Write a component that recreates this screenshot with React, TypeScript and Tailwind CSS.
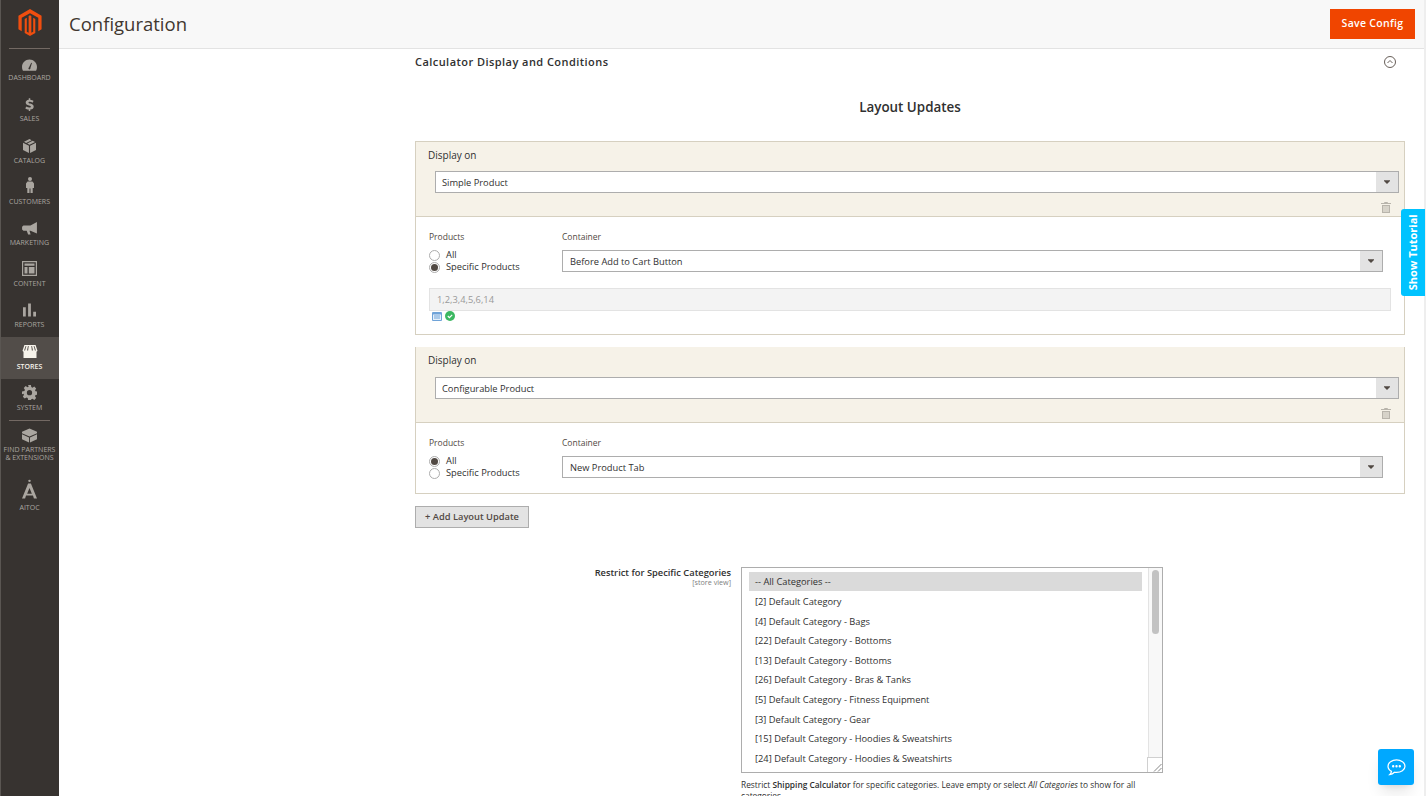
import type { ReactNode } from 'react';

const font = "font-['Open_Sans',sans-serif]";

// sidebar icons are drawn by hand, the admin font is not available here
const icons: Record<string, ReactNode> = {
  dashboard: (
    <svg viewBox="0 0 16 12" className="w-[15px] h-[12px] translate-y-[2px]" fill="currentColor">
      <path d="M8 0C3.6 0 0 3.6 0 8c0 1.4.3 2.8 1 4h14c.7-1.2 1-2.6 1-4 0-4.4-3.6-8-8-8zM7.4 8.6l2.4-5 .8.3-1.6 5.4a1.1 1.1 0 1 1-1.6-.7z" fillRule="evenodd" />
    </svg>
  ),
  sales: (
    <svg viewBox="0 0 12 17" className="w-[9px] h-[15px]" fill="currentColor">
      <path d="M5 0h2v2c2 .2 3.6 1 4.4 1.7L10 6C9 5.200 7.800 4.700 6.400 4.700c-1.200 0-1.800.4-1.800 1 0 .7.8 1 2.600 1.600 2.700.8 4.400 1.800 4.400 4.200 0 2-1.500 3.500-4.600 3.800V17H5v-1.700C3 15.100 1.300 14.300.3 13.400L2 11.100c1.100.9 2.500 1.500 4 1.500 1.300 0 1.900-.4 1.900-1.100 0-.7-.8-1.100-2.600-1.700C2.600 9 .9 8 .9 5.800.9 3.900 2.400 2.400 5 2V0z" />
    </svg>
  ),
  catalog: (
    <svg viewBox="0 0 14 15" className="w-[13px] h-[14px]" fill="currentColor">
      <path d="M7 0l2.300 1.200-5.900 3-2.300-1.200L7 0zM10.400 1.800L13 3.100 7 6.100 4.500 4.800l5.900-3zM0 4l6.400 3.200V15L0 11.700V4zM14 4v7.700L7.600 15V7.200L14 4z" />
    </svg>
  ),
  customers: (
    <svg viewBox="0 0 8 16" className="w-[8px] h-[16px] -translate-y-[2px]" fill="currentColor">
      <circle cx="4" cy="2" r="2" />
      <path d="M1.500 4.600h5L8 6.500v4.500H6.700V16H4.500v-4.500h-1V16H1.300v-5H0V6.500z" />
    </svg>
  ),
  marketing: (
    <svg viewBox="0 0 16 14" className="w-[15px] h-[13px] translate-y-[1px]" fill="currentColor">
      <path d="M16 0v12.500L9 9.300H8l1.200 4.200H6.500L5 9.300H1.500L0 8V5l1.500-1.200H9L16 0z" />
    </svg>
  ),
  content: (
    <svg viewBox="0 0 15 15" className="w-[15px] h-[15px] -translate-y-[1px]" fill="currentColor">
      <path fillRule="evenodd" d="M0 0h15v15H0V0zm1.200 1.200v12.600h12.600V1.200H1.200zM2.500 2.500h10v2.300h-10V2.500zM2.500 6h3v6.500h-3V6zM6.800 6h5.700v6.500H6.800V6z" />
    </svg>
  ),
  reports: (
    <svg viewBox="0 0 14 14" className="w-[13px] h-[14px]" fill="currentColor">
      <path d="M0 4h3v10H0zM5.500 0h3v14h-3zM11 9h3v5h-3z" />
    </svg>
  ),
  stores: (
    <svg viewBox="0 0 16 14" className="w-[16px] h-[13px]" fill="currentColor">
      <path fillRule="evenodd" d="M2 0h12l2 6c0 .8-.5 1.200-1 1.200V14H1V7.200C.5 7.200 0 6.800 0 6l2-6zm1.300 1L1.600 6h1.100l1.400-5h-.8zm2.500 0L4.800 6H6l.6-5h-.8zm3.600 0L10 6h1.200l-1-5h-.8zm2.500 0l1.400 5h1.100L12.700 1h-.8z" />
    </svg>
  ),
  system: (
    <svg viewBox="0 0 16 16" className="w-[15px] h-[15px]" fill="currentColor">
      <path fillRule="evenodd" d="M6.500 0h3l.4 2.200 1.300.6L13.100 1.500l2 2.100-1.200 1.900.5 1.200 2.600.5v3l-2.600.5-.5 1.200 1.200 1.900-2 2.100-1.900-1.300-1.300.6L9.500 16h-3l-.4-2.200-1.300-.6-1.900 1.300-2-2.100 1.200-1.900-.5-1.200L0 9.800v-3l2.600-.5.5-1.200L1.900 3.200l2-2.100 1.900 1.300 1.300-.6L6.500 0zM8 5.400a2.800 2.800 0 1 0 0 5.600 2.800 2.800 0 0 0 0-5.600z" />
    </svg>
  ),
  partners: (
    <svg viewBox="0 0 16 15" className="w-[15px] h-[15px]" fill="currentColor">
      <path d="M8 0l8 3.600v1.400L8 8.600 0 5V3.600L8 0zM0 6.200l7.500 3.400V15L0 11.600V6.200zM16 6.200v5.400L8.500 15V9.600L16 6.200z" />
    </svg>
  ),
  aitoc: (
    <svg viewBox="0 0 16 20" className="w-[15px] h-[20px]" fill="currentColor">
      <circle cx="8" cy="1.300" r="1.300" />
      <path fillRule="evenodd" d="M6.500 4h3L16 20h-3.300l-1-3H4.300l-1 3H0L6.500 4zM8 9l-2.500 6h5L8 9z" />
    </svg>
  ),
};

const navItems = [
  { key: 'dashboard', label: 'DASHBOARD' },
  { key: 'sales', label: 'SALES' },
  { key: 'catalog', label: 'CATALOG' },
  { key: 'customers', label: 'CUSTOMERS' },
  { key: 'marketing', label: 'MARKETING' },
  { key: 'content', label: 'CONTENT' },
  { key: 'reports', label: 'REPORTS' },
  { key: 'stores', label: 'STORES', active: true },
  { key: 'system', label: 'SYSTEM' },
];

const categories = [
  '[2] Default Category',
  '[4] Default Category - Bags',
  '[22] Default Category - Bottoms',
  '[13] Default Category - Bottoms',
  '[26] Default Category - Bras & Tanks',
  '[5] Default Category - Fitness Equipment',
  '[3] Default Category - Gear',
  '[15] Default Category - Hoodies & Sweatshirts',
  '[24] Default Category - Hoodies & Sweatshirts',
];

function Sidebar() {
  return (
    <aside className="w-[59px] h-full shrink-0 bg-[#373330] border-l border-l-[#5a5652] flex flex-col text-[#aaa6a0]">
      <div className="h-[49px] ml-[8px] mr-[9px] border-b border-[#736963] flex items-start justify-center pt-[9px] shrink-0">
        <svg viewBox="0 0 24 28" className="w-[24px] h-[27px]" fill="#f04e0f">
          <path d="M12 0L24 7v14l-3.400 2V9.200L12 4.400 3.400 9.200V23L0 21V7z" />
          <path d="M6.500 10.300L8.700 9.100v14.500l1.900 1.100V7.300L12 6.500l1.400.8v17.400l1.900-1.100V9.100l2.200 1.200V25L12 28l-5.500-3z" />
        </svg>
      </div>
      {navItems.map((item) => (
        <div
          key={item.key}
          className={`h-[41.2px] shrink-0 flex flex-col items-center justify-end pb-[6px] pr-[1px] ${
            item.active ? 'bg-[#524d49] text-[#f7f3eb] font-semibold' : ''
          }`}
        >
          <div className="h-[18px] flex items-center justify-center">{icons[item.key]}</div>
          <span className="text-[7px] leading-[12px] whitespace-nowrap">{item.label}</span>
        </div>
      ))}
      <div className="ml-[8px] mr-[9px] border-t border-[#736963]" />
      <div className="flex flex-col items-center pt-[7px] pr-[1px]">
        {icons.partners}
        <span className="mt-[3px] text-[7px] leading-[8.500px] text-center whitespace-nowrap">
          FIND PARTNERS
          <br />
          &amp; EXTENSIONS
        </span>
      </div>
      <div className="flex flex-col items-center mt-[16px] pr-[1px]">
        {icons.aitoc}
        <span className="mt-[3px] text-[7px] leading-[11px]">AITOC</span>
      </div>
    </aside>
  );
}

function Caret() {
  return (
    <svg viewBox="0 0 8 5" className="w-[6px] h-[4px]" fill="#514943">
      <path d="M0 0h8v1L4 5 0 1z" />
    </svg>
  );
}

function SelectBox({ value, className, inset }: { value: string; className: string; inset?: boolean }) {
  return (
    <div className={`h-[22px] flex bg-white border border-[#adadad] ${className}`}>
      <div className={`flex-1 ${inset ? 'pl-[7px]' : 'pl-[6px]'} text-[9.300px] leading-[21px] text-[#303030]`}>{value}</div>
      <div className="w-[22px] bg-[#e3e3e3] flex items-center justify-center">
        <Caret />
      </div>
    </div>
  );
}

function Radio({ checked, label }: { checked?: boolean; label: string }) {
  return (
    <div className="h-[12px] flex items-center">
      <span className="w-[11px] h-[11px] rounded-full border border-[#adadad] bg-white flex items-center justify-center">
        {checked && <span className="w-[7px] h-[7px] rounded-full bg-[#514943]" />}
      </span>
      <span className="ml-[6px] text-[9.300px] text-[#303030]">{label}</span>
    </div>
  );
}

function Trash() {
  return (
    <svg viewBox="0 0 10 11" className="w-[10px] h-[11px]" fill="#b8b4ab">
      <path fillRule="evenodd" d="M3.500 0h3l.5 1h3v1H0V1h3zM1 3h8v8H1zM2.500 4v6h1V4zM4.500 4v6h1V4zM6.500 4v6h1V4z" />
    </svg>
  );
}

function PanelHeader({ value, tall }: { value: string; tall?: boolean }) {
  return (
    <div className={`${tall ? 'h-[76px]' : 'h-[75px]'} pt-[6px] bg-[#f6f2e8] border-b border-[#d6d0c0] pl-[12px] pr-[5px] flex flex-col`}>
      <div className="text-[10px] leading-[14px] text-[#303030]">Display on</div>
      <SelectBox value={value} className={tall ? 'mt-[9.500px] ml-[7px]' : 'mt-[9px] ml-[7px]'} />
      <div className={`flex justify-end pr-[8px] ${tall ? 'mt-[9.500px]' : 'mt-[9px]'}`}>
        <Trash />
      </div>
    </div>
  );
}

function ColumnLabels() {
  return (
    <div className="flex text-[8.500px] leading-[12px] font-medium text-[#514943]">
      <span className="w-[133px]">Products</span>
      <span>Container</span>
    </div>
  );
}

export default function App() {
  return (
    <div className={`${font} w-[1427px] h-[796px] overflow-hidden flex bg-white relative`}>
      <Sidebar />

      <div className="flex-1 min-w-0 flex flex-col border-r-[2px] border-r-[#eeeeee] mr-[1px]">
        <header className="h-[49px] shrink-0 bg-[#f8f8f8] border-b border-[#e3e3e3] flex items-center justify-between pl-[10px] pr-[9px]">
          <h1 className="text-[18.500px] font-normal text-[#41362f]">Configuration</h1>
          <button className="w-[85px] h-[30px] -mt-[1px] bg-[#f04500] text-white text-[10.500px] font-semibold tracking-[0.3px]">
            Save Config
          </button>
        </header>

        <main className="flex-1 min-h-0 pl-[356px] pr-[19px]">
          <div className="h-[26px] flex items-center justify-between">
            <span className="text-[11px] font-semibold tracking-[0.45px] text-[#303030]">Calculator Display and Conditions</span>
            <svg viewBox="0 0 12 12" className="w-[12px] h-[12px] mr-[9px]" fill="none" stroke="#41362f" strokeWidth="0.800">
              <circle cx="6" cy="6" r="5.500" />
              <path d="M3.500 7l2.500-2.500L8.500 7" />
            </svg>
          </div>

          <h2 className="mt-[22px] text-center text-[13.400px] leading-[20px] font-semibold text-[#303030]">Layout Updates</h2>

          <section className="mt-[24px] h-[194px] border border-[#d6d0c0]">
            <PanelHeader value="Simple Product" />
            <div className="pt-[14px] pl-[13px] pr-[13px]">
              <ColumnLabels />
              <div className="flex mt-[6px]">
                <div className="w-[133px]">
                  <Radio label="All" />
                  <Radio checked label="Specific Products" />
                </div>
                <SelectBox value="Before Add to Cart Button" inset className="flex-1 mr-[8px] mt-[1px]" />
              </div>
              <div className="mt-[15px] h-[23px] bg-[#f3f3f3] border border-[#e3e3e3] pl-[7px] text-[9.300px] leading-[21px] text-[#999999]">
                1,2,3,4,5,6,14
              </div>
              <div className="pl-[3px] flex items-center gap-[3px]">
                <svg viewBox="0 0 10 9" className="w-[10px] h-[9px]">
                  <rect width="10" height="9" rx="1" fill="#6fa3d8" />
                  <rect x="1" y="2.500" width="8" height="5.500" fill="#e6f0fa" />
                  <path d="M2 4h6M2 6h6" stroke="#6fa3d8" />
                </svg>
                <svg viewBox="0 0 10 10" className="w-[10px] h-[10px]">
                  <circle cx="5" cy="5" r="5" fill="#3cb861" />
                  <path d="M2.800 5l1.600 1.600 2.800-2.800" stroke="#fff" strokeWidth="1.200" fill="none" />
                </svg>
              </div>
            </div>
          </section>

          <section className="mt-[12px] h-[147px] border-x border-b border-[#d6d0c0]">
            <PanelHeader value="Configurable Product" tall />
            <div className="pt-[14px] pl-[13px] pr-[13px]">
              <ColumnLabels />
              <div className="flex mt-[6px]">
                <div className="w-[133px]">
                  <Radio checked label="All" />
                  <Radio label="Specific Products" />
                </div>
                <SelectBox value="New Product Tab" inset className="flex-1 mr-[8px] mt-[0.500px]" />
              </div>
            </div>
          </section>

          <button className="mt-[12px] block w-[114px] h-[22px] bg-[#e3e3e3] border border-[#adadad] text-[9.300px] font-semibold text-[#514943]">
            + Add Layout Update
          </button>

          <div className="mt-[39px] flex">
            <div className="w-[316px] text-right">
              <div className="text-[9.300px] leading-[11px] font-semibold text-[#303030]">Restrict for Specific Categories</div>
              <div className="text-[7.200px] leading-[9px] text-[#808080]">[store view]</div>
            </div>
            <div className="ml-[10px] w-[422px]">
              <div className="h-[206px] relative flex border border-[#adadad]">
                <div className="flex-1 pt-[4px] pl-[7px] pr-[6px]">
                  <div className="h-[19px] mb-[1px] bg-[#dadada] pl-[6px] text-[9.300px] leading-[19px] text-[#303030]">-- All Categories --</div>
                  {categories.map((name) => (
                    <div key={name} className="h-[19.600px] pl-[6px] text-[9.300px] leading-[20px] text-[#303030] whitespace-nowrap">
                      {name}
                    </div>
                  ))}
                </div>
                <div className="w-[14px] bg-[#f8f8f8] border-l border-[#e3e3e3] pt-[2px] px-[3px]">
                  <div className="h-[64px] rounded-full bg-[#c2c2c2]" />
                </div>
                <div className="absolute right-0 bottom-0 w-[15px] h-[15px] bg-white border-l border-t border-[#d0d0d0] flex items-end justify-end">
                  <svg viewBox="0 0 10 10" className="w-[10px] h-[10px]" stroke="#555" strokeWidth="0.700">
                    <path d="M2 9.500L9.500 2M6 9.500L9.500 6" />
                  </svg>
                </div>
              </div>
              <p className="mt-[6px] text-[8.350px] leading-[11px] text-[#303030]">
                Restrict <b className="font-semibold">Shipping Calculator</b> for specific categories. Leave empty or select <i>All Categories</i> to show for all categories.
              </p>
            </div>
          </div>
        </main>
      </div>

      <div className="absolute left-[1401px] top-[209px] w-[24px] h-[87px] bg-[#00c3ff] rounded-l-[3px] flex items-center justify-center">
        <span className="text-white text-[11px] font-bold whitespace-nowrap -rotate-90">Show Tutorial</span>
      </div>

      <div className="absolute left-[1378px] top-[749px] w-[36px] h-[36px] bg-[#00a8ff] rounded-[3px] shadow-lg flex items-center justify-center">
        <svg viewBox="0 0 20 18" className="w-[19px] h-[17px]" fill="none" stroke="#fff" strokeWidth="1.300">
          <path d="M10 1c4.700 0 9 2.600 9 6.700s-4.300 6.500-9 6.500c-.8 0-1.500 0-2.200-.2-1.200 1.300-3 2.300-5 2.500 1-1 1.700-2 1.900-3.400C2.400 11.900 1 10 1 7.700 1 3.600 5.300 1 10 1z" />
          <circle cx="6.500" cy="7.700" r="0.600" fill="#fff" />
          <circle cx="10" cy="7.700" r="0.600" fill="#fff" />
          <circle cx="13.500" cy="7.700" r="0.600" fill="#fff" />
        </svg>
      </div>
    </div>
  );
}
